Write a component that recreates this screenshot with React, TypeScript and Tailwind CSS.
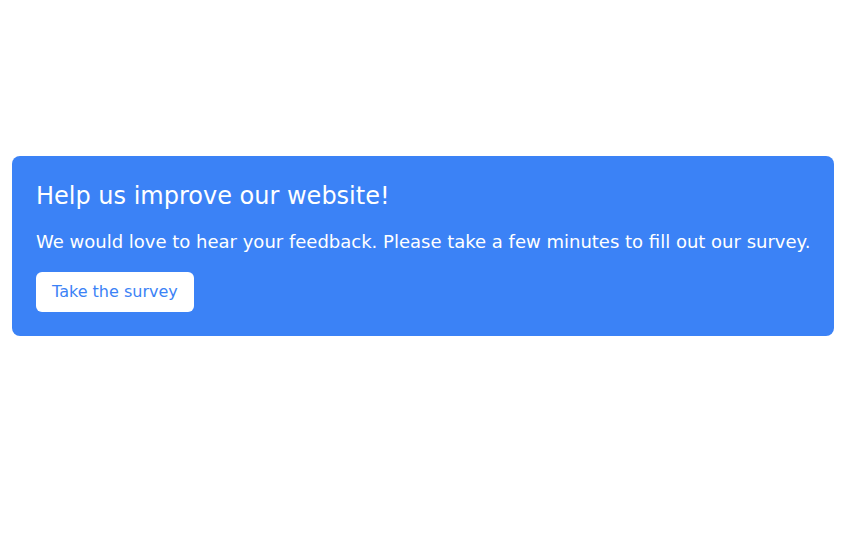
const App = () => {
  return (
    <div className="pt-[156px] pl-3 pr-2 font-['DejaVu_Sans',sans-serif]">
      {/* SURVEY BANNER */}
      <div className="bg-[#3b82f6] rounded-lg p-6 text-white">
        <h2 className="text-2xl mb-4">Help us improve our website!</h2>
        <p className="text-lg mb-4 whitespace-nowrap">
          We would love to hear your feedback. Please take a few minutes to fill out our survey.
        </p>
        <button className="bg-white text-[#3b82f6] rounded-md px-4 py-2 text-base">
          Take the survey
        </button>
      </div>
    </div>
  );
};

export default App;
